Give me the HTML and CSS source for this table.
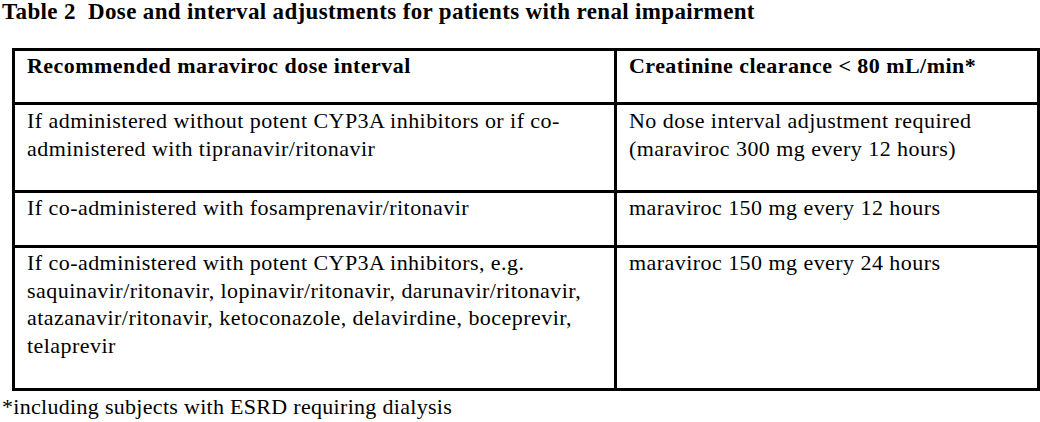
FILE: index.html
```html
<!DOCTYPE html>
<html>
<head>
<meta charset="utf-8">
<link rel="stylesheet" href="styles.css">
</head>
<body>
<div class="page">
  <h1 class="title">Table 2&nbsp; Dose and interval adjustments for patients with renal impairment</h1>
  <table class="dose">
    <colgroup><col class="c1"><col class="c2"></colgroup>
    <tr class="r-head">
      <th>Recommended maraviroc dose interval</th>
      <th>Creatinine clearance &lt; 80 mL/min*</th>
    </tr>
    <tr class="r-1">
      <td>If administered without potent CYP3A inhibitors or if co-administered with tipranavir/ritonavir</td>
      <td>No dose interval adjustment required (maraviroc 300 mg every 12 hours)</td>
    </tr>
    <tr class="r-2">
      <td>If co-administered with fosamprenavir/ritonavir</td>
      <td>maraviroc 150 mg every 12 hours</td>
    </tr>
    <tr class="r-3">
      <td>If co-administered with potent CYP3A inhibitors, e.g. saquinavir/ritonavir, lopinavir/ritonavir, darunavir/ritonavir, atazanavir/ritonavir, ketoconazole, delavirdine, boceprevir, telaprevir</td>
      <td>maraviroc 150 mg every 24 hours</td>
    </tr>
  </table>
  <p class="note">*including subjects with ESRD requiring dialysis</p>
</div>
</body>
</html>
```
FILE: styles.css
```css
html, body {
  margin: 0;
  padding: 0;
  background: #fff;
}
body {
  font-family: "Liberation Serif", "Times New Roman", serif;
  color: #000;
}
.page {
  width: 1040px;
}
.title {
  margin: 0 0 0 2px;
  font-size: 23px;
  line-height: 24px;
  letter-spacing: 0.35px;
  font-weight: bold;
  white-space: nowrap;
}
.dose {
  border-collapse: collapse;
  margin: 24px 0 0 12px;
  width: 1025px;
  table-layout: fixed;
}
.c1 { width: 602px; }
.c2 { width: 423px; }
.dose th, .dose td {
  border: 3px solid #000;
  vertical-align: top;
  text-align: left;
  font-size: 22px;
  line-height: 27.5px;
  letter-spacing: 0.45px;
  padding: 1px 12px 0 12px;
}
.dose th { font-weight: bold; }
.r-head th { height: 50px; }
.r-1 td { height: 83px; padding-top: 2px; }
.r-2 td { height: 51px; }
.r-3 td { height: 139px; }
.note {
  margin: 4px 0 0 2px;
  font-size: 22px;
  line-height: 24px;
  letter-spacing: 0.3px;
  white-space: nowrap;
}
```
